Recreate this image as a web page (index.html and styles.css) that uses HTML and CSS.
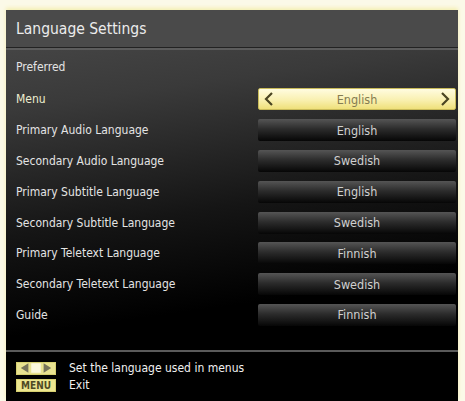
FILE: index.html
```html
<!DOCTYPE html>
<html lang="en">
<head>
  <meta charset="UTF-8">
  <title>Language Settings</title>
  <link rel="stylesheet" href="styles.css">
</head>
<body>

  <!-- SETTINGS PANEL -->
  <div id="panel">

    <div class="title-bar">Language Settings</div>
    <div class="divider"></div>

    <div class="section-title">Preferred</div>

    <div class="rows">
      <div class="row active">
        <span class="label">Menu</span>
        <div class="value">
          <svg class="arrow" width="10" height="16" viewBox="0 0 10 16"><polyline points="8,2 2,8 8,14" fill="none" stroke="#4a4522" stroke-width="2.2"/></svg>
          <span>English</span>
          <svg class="arrow" width="10" height="16" viewBox="0 0 10 16"><polyline points="2,2 8,8 2,14" fill="none" stroke="#4a4522" stroke-width="2.2"/></svg>
        </div>
      </div>
      <div class="row">
        <span class="label">Primary Audio Language</span>
        <div class="value"><span>English</span></div>
      </div>
      <div class="row">
        <span class="label">Secondary Audio Language</span>
        <div class="value"><span>Swedish</span></div>
      </div>
      <div class="row">
        <span class="label">Primary Subtitle Language</span>
        <div class="value"><span>English</span></div>
      </div>
      <div class="row">
        <span class="label">Secondary Subtitle Language</span>
        <div class="value"><span>Swedish</span></div>
      </div>
      <div class="row">
        <span class="label">Primary Teletext Language</span>
        <div class="value"><span>Finnish</span></div>
      </div>
      <div class="row">
        <span class="label">Secondary Teletext Language</span>
        <div class="value"><span>Swedish</span></div>
      </div>
      <div class="row">
        <span class="label">Guide</span>
        <div class="value"><span>Finnish</span></div>
      </div>
    </div>

    <!-- KEY HELP -->
    <div class="footer">
      <div class="hint">
        <span class="key key-arrows">
          <svg width="40" height="12" viewBox="0 0 40 12"><polygon points="4,6 12,1 12,11" fill="#77745a"/><rect x="15" y="1" width="10" height="10" fill="#fbf8dc"/><polygon points="36,6 28,1 28,11" fill="#77745a"/></svg>
        </span>
        <span>Set the language used in menus</span>
      </div>
      <div class="hint">
        <span class="key">MENU</span>
        <span>Exit</span>
      </div>
    </div>

  </div>

</body>
</html>
```

FILE: styles.css
```css
body {
  background-color: #fbf9e8;
  margin: 0;
  padding: 0;
  font-family: "DejaVu Sans Condensed", "Liberation Sans Narrow", sans-serif;
  color: #e4e4e4;
}

#panel {
  margin: 10px 7px 0 6px;
  height: 391px;
  display: flex;
  flex-direction: column;
  background: linear-gradient(172deg, #4b4b4b 0%, #3a3a3a 22%, #151515 50%, #000 72%);
  box-shadow: 0 -2px 4px #f4eeb0;
}

.title-bar {
  height: 37px;
  display: flex;
  align-items: center;
  padding-left: 10px;
  background: #4a4a4a;
  font-size: 15.5px;
  color: #ececec;
}

.divider {
  height: 1px;
  background: #222;
  border-bottom: 2px solid #5c5c5c;
}

.section-title {
  height: 34px;
  display: flex;
  align-items: center;
  padding-left: 10px;
  font-size: 12px;
}

.rows {
  display: flex;
  flex-direction: column;
}

.row {
  height: 30.8px;
  display: flex;
  align-items: center;
  justify-content: space-between;
  padding: 0 2px 0 10px;
  font-size: 12px;
}

.row.active .label {
  color: #eeeed0;
}

.value {
  width: 198px;
  height: 22px;
  display: flex;
  align-items: center;
  justify-content: center;
  color: #d0d0d0;
  background: linear-gradient(#555, #2c2c2c 45%, #060606);
  border-radius: 2px;
  font-size: 12.5px;
}

.row.active .value {
  justify-content: space-between;
  padding: 0 5px;
  box-sizing: border-box;
  color: #857c52;
  background: linear-gradient(#fffce0, #f9f0b0 55%, #efe07a);
  border: 1px solid #c9bb5a;
}

.arrow {
  display: block;
}

.footer {
  margin-top: auto;
  height: 49px;
  border-top: 2px solid #5a5a5a;
  display: flex;
  flex-direction: column;
  justify-content: center;
  gap: 3px;
  padding-left: 10px;
  font-size: 12px;
  color: #f0f0f0;
}

.hint {
  display: flex;
  align-items: center;
  gap: 13px;
}

.key {
  width: 40px;
  height: 13px;
  display: flex;
  align-items: center;
  justify-content: center;
  background: #ece690;
  border: 1px solid #d6cf70;
  color: #4e4a24;
  font-size: 10px;
  font-weight: bold;
  box-sizing: border-box;
}

.key-arrows {
  background: #e8e290;
}
```
